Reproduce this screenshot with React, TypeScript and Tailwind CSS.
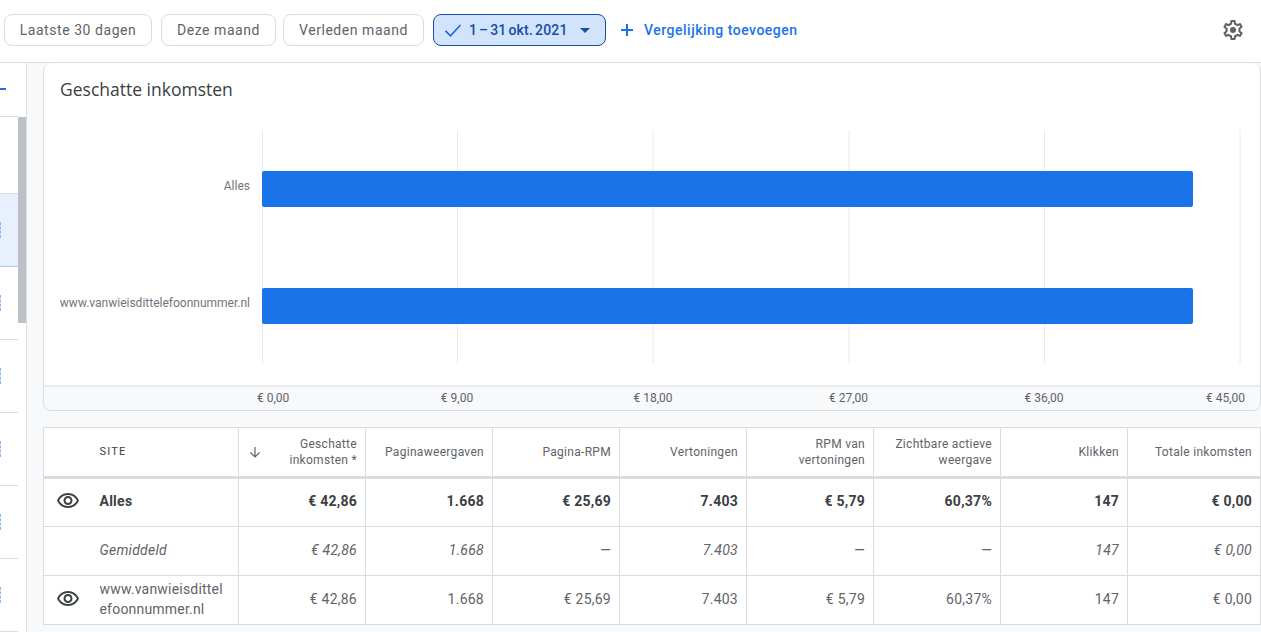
const eyePath =
  "M12 6c3.79 0 7.17 2.13 8.82 5.5C19.17 14.87 15.79 17 12 17s-7.17-2.13-8.82-5.5C4.83 8.13 8.21 6 12 6m0-2C7 4 2.73 7.11 1 11.5 2.73 15.89 7 19 12 19s9.27-3.11 11-7.5C21.27 7.11 17 4 12 4zm0 5c1.38 0 2.5 1.12 2.5 2.5S13.38 14 12 14s-2.5-1.12-2.5-2.5S10.62 9 12 9m0-2c-2.48 0-4.5 2.02-4.5 4.5S9.52 16 12 16s4.5-2.02 4.5-4.5S14.48 7 12 7z";

const gearPath =
  "M19.43 12.98c.04-.32.07-.64.07-.98 0-.34-.03-.66-.07-.98l2.11-1.65c.19-.15.24-.42.12-.64l-2-3.46c-.09-.16-.26-.25-.44-.25-.06 0-.12.01-.17.03l-2.49 1c-.52-.4-1.08-.73-1.69-.98l-.38-2.65C14.46 2.18 14.25 2 14 2h-4c-.25 0-.46.18-.49.42l-.38 2.65c-.61.25-1.17.59-1.69.98l-2.49-1c-.06-.02-.12-.03-.18-.03-.17 0-.34.09-.43.25l-2 3.46c-.13.22-.07.49.12.64l2.11 1.65c-.04.32-.07.65-.07.98 0 .33.03.66.07.98l-2.11 1.65c-.19.15-.24.42-.12.64l2 3.46c.09.16.26.25.44.25.06 0 .12-.01.17-.03l2.49-1c.52.4 1.08.73 1.69.98l.38 2.65c.03.24.24.42.49.42h4c.25 0 .46-.18.49-.42l.38-2.65c.61-.25 1.17-.59 1.69-.98l2.49 1c.06.02.12.03.18.03.17 0 .34-.09.43-.25l2-3.46c.12-.22.07-.49-.12-.64l-2.11-1.65zm-1.98-1.71c.04.31.05.52.05.73 0 .21-.02.43-.05.73l-.14 1.13.89.7 1.08.84-.7 1.21-1.27-.51-1.04-.42-.9.68c-.43.32-.84.56-1.25.73l-1.06.43-.16 1.13-.2 1.35h-1.4l-.19-1.35-.16-1.13-1.06-.43c-.43-.18-.83-.41-1.23-.71l-.91-.7-1.06.43-1.27.51-.7-1.21 1.08-.84.89-.7-.14-1.13c-.03-.31-.05-.54-.05-.74s.02-.43.05-.73l.14-1.13-.89-.7-1.08-.84.7-1.21 1.27.51 1.04.42.9-.68c.43-.32.84-.56 1.25-.73l1.06-.43.16-1.13.2-1.35h1.39l.19 1.35.16 1.13 1.06.43c.43.18.83.41 1.23.71l.91.7 1.06-.43 1.27-.51.7 1.21-1.07.85-.89.7.14 1.13z";

const Eye = () => (
  <svg viewBox="0 0 24 24" className="w-6 h-6 ml-3 fill-[#3c4043]">
    <path d={eyePath} />
  </svg>
);

const chipClass =
  "h-8 rounded-lg border border-[#dadce0] bg-white text-sm font-[450] text-[#5f6368] tracking-[0.55px]";

const TopBar = () => (
  <header className="flex items-center h-[63px] shrink-0 border-b border-[#dadce0] bg-white pl-1 pr-[16px] pb-[2px]">
    <button className={chipClass + " w-[148px]"}>Laatste 30 dagen</button>
    <button className={chipClass + " w-[115px] ml-[9px]"}>Deze maand</button>
    <button className={chipClass + " w-[141px] ml-[7px]"}>Verleden maand</button>
    <button className="flex items-center h-8 w-[173px] ml-[9px] pl-[9px] rounded-lg border border-[#174ea6] bg-[#d2e3fc] text-sm font-medium text-[#174ea6] tracking-[0.2px] [word-spacing:-1.75px]">
      <svg viewBox="0 0 24 24" className="w-5 h-5 fill-none stroke-[#1967d2] stroke-[1.9]">
        <path d="M3 13l6 6L21 6" />
      </svg>
      <span className="ml-[6px]">1 – 31 okt. 2021</span>
      <svg viewBox="0 0 10 5" className="w-[10px] h-[5px] ml-[12px] fill-[#174ea6]">
        <path d="M0 0h10L5 5z" />
      </svg>
    </button>
    <button className="flex items-center ml-[14px] text-sm font-medium text-[#1a73e8] tracking-[0.5px]">
      <svg viewBox="0 0 14 14" className="w-[14px] h-[14px] fill-[#1a73e8]">
        <path d="M6 1h2v5h5v2H8v5H6V8H1V6h5z" />
      </svg>
      <span className="ml-[10px]">Vergelijking toevoegen</span>
    </button>
    <svg viewBox="0 0 24 24" className="w-6 h-6 ml-auto fill-[#5f6368]">
      <path d={gearPath} />
      <circle cx="12" cy="12" r="3" />
    </svg>
  </header>
);

const SideRow = ({ selected }: { selected?: boolean }) => (
  <div
    className={
      selected
        ? "h-[73px] shrink-0 flex items-center border-b border-[#a8c7fa] bg-[#e8f0fe]"
        : "h-[73px] shrink-0 flex items-center border-b border-[#dadce0]"
    }
  >
    <div className="w-[1px] h-[16px] border-l border-dashed border-[#8ab4f8]" />
  </div>
);

const Sidebar = () => (
  <aside className="flex w-[27px] shrink-0 border-r border-[#dadce0] bg-white overflow-hidden">
    <div className="w-[18px] shrink-0 flex flex-col">
      <div className="h-[54px] shrink-0 border-b border-[#dadce0] flex items-center">
        <div className="w-[6px] h-[2px] bg-[#1a73e8] mt-[-1px]" />
      </div>
      <div className="h-[77px] shrink-0 border-b border-[#dadce0]" />
      <SideRow selected />
      <SideRow />
      <SideRow />
      <SideRow />
      <SideRow />
      <SideRow />
    </div>
    <div className="w-[8px] pt-[54px]">
      <div className="h-[206px] bg-[#bdc1c6]" />
    </div>
  </aside>
);

const gridX = [0.5, 195.5, 391, 587, 782.5, 978];

const ChartCard = () => (
  <section className="h-[348px] shrink-0 flex flex-col rounded-lg border border-t-0 border-[#dadce0] bg-white overflow-hidden">
    <h2 className="h-[67px] shrink-0 pl-4 pt-[14px] text-[17.5px] leading-6 text-[#3c4043] font-['Open_Sans',sans-serif]">
      Geschatte inkomsten
    </h2>
    <div className="flex h-[234px] shrink-0">
      <div className="w-[218px] shrink-0 grid grid-rows-2 pr-3 text-right text-xs text-[#70757a]">
        <div className="flex items-center justify-end pb-[6px]">Alles</div>
        <div className="flex items-center justify-end pb-[6px]">www.vanwieisdittelefoonnummer.nl</div>
      </div>
      <svg width="980" height="234" viewBox="0 0 980 234">
        {gridX.map((x) => (
          <line key={x} x1={x} x2={x} y1="0" y2="234" stroke="#e8eaed" strokeWidth="1" />
        ))}
        <rect x="0" y="41" width="931" height="36" rx="2" fill="#1a73e8" />
        <rect x="0" y="158" width="931" height="36" rx="2" fill="#1a73e8" />
      </svg>
    </div>
    <div className="mt-[21px] flex-1 border-t-2 border-[#e8eaed] bg-[#f8f9fa] pl-[213px]">
      <div className="grid grid-cols-[102px_196px_196px_195px_196px_103px] h-full items-center text-xs text-[#5f6368] pb-[1px]">
        <span>€ 0,00</span>
        <span className="text-center">€ 9,00</span>
        <span className="text-center">€ 18,00</span>
        <span className="text-center">€ 27,00</span>
        <span className="text-center">€ 36,00</span>
        <span className="text-right">€ 45,00</span>
      </div>
    </div>
  </section>
);

const metricHeads = [
  ["Paginaweergaven"],
  ["Pagina-RPM"],
  ["Vertoningen"],
  ["RPM van", "vertoningen"],
  ["Zichtbare actieve", "weergave"],
  ["Klikken"],
  ["Totale inkomsten"],
];

const totals = ["€ 42,86", "1.668", "€ 25,69", "7.403", "€ 5,79", "60,37%", "147", "€ 0,00"];
const averages = ["€ 42,86", "1.668", "—", "7.403", "—", "—", "147", "€ 0,00"];

const cell = "border border-[#dadce0] pr-2 text-right";

const SiteTable = () => (
  <table className="mt-4 w-[1217px] table-fixed bg-white text-sm text-[#5f6368] tracking-[0.25px]">
    <colgroup>
      <col className="w-[56px]" />
      <col className="w-[139px]" />
      <col className="w-[127px]" />
      <col className="w-[127px]" />
      <col className="w-[127px]" />
      <col className="w-[127px]" />
      <col className="w-[127px]" />
      <col className="w-[127px]" />
      <col className="w-[127px]" />
      <col className="w-[133px]" />
    </colgroup>
    <thead>
      <tr className="h-[50px] text-xs text-[#5f6368] tracking-[0.3px] leading-4">
        <th className="border-y border-l border-b-[3px] border-[#dadce0]" />
        <th className="border-y border-r border-b-[3px] border-[#dadce0] text-left text-[11px] font-normal tracking-[1.2px] text-[#3c4043]">
          SITE
        </th>
        <th className={cell + " border-b-[3px] font-[450]"}>
          <div className="flex items-center justify-between pl-[10px]">
            <svg viewBox="0 0 12 12" className="w-3 h-3 fill-none stroke-[#5f6368] stroke-[1.2]">
              <path d="M6 1v10M1.5 6.5L6 11l4.500-4.500" />
            </svg>
            <span>
              Geschatte
              <br />
              inkomsten *
            </span>
          </div>
        </th>
        {metricHeads.map((lines) => (
          <th key={lines[0]} className={cell + " border-b-[3px] font-[450]"}>
            {lines.map((line) => (
              <div key={line}>{line}</div>
            ))}
          </th>
        ))}
      </tr>
    </thead>
    <tbody>
      <tr className="h-[49px] font-bold text-[#3c4043]">
        <td className="border-y border-l border-[#dadce0] pb-[3px]"><Eye /></td>
        <td className="border-y border-r border-[#dadce0] pb-[3px]">Alles</td>
        {totals.map((v, i) => (
          <td key={i} className={cell + " pb-[3px]"}>{v}</td>
        ))}
      </tr>
      <tr className="h-[49px] italic">
        <td className="border-y border-l border-[#dadce0]" />
        <td className="border-y border-r border-[#dadce0] pb-[2px]">Gemiddeld</td>
        {averages.map((v, i) => (
          <td key={i} className={cell + " pb-[2px]"}>{v}</td>
        ))}
      </tr>
      <tr className="h-[49px]">
        <td className="border-y border-l border-[#dadce0] pb-[2px]"><Eye /></td>
        <td className="border-y border-r border-[#dadce0] break-all leading-5 pr-[13px] pb-[2px] tracking-[0.2px]">www.vanwieisdittelefoonnummer.nl</td>
        {totals.map((v, i) => (
          <td key={i} className={cell + " pb-[2px]"}>{v}</td>
        ))}
      </tr>
    </tbody>
  </table>
);

export default function App() {
  return (
    <div className="flex flex-col h-[632px] w-[1261px] overflow-hidden bg-white font-['Roboto',sans-serif]">
      <TopBar />
      <div className="flex flex-1 min-h-0">
        <Sidebar />
        <main className="flex-1 min-w-0 flex flex-col bg-[#f8f9fa] pl-4">
          <ChartCard />
          <SiteTable />
        </main>
      </div>
    </div>
  );
}
